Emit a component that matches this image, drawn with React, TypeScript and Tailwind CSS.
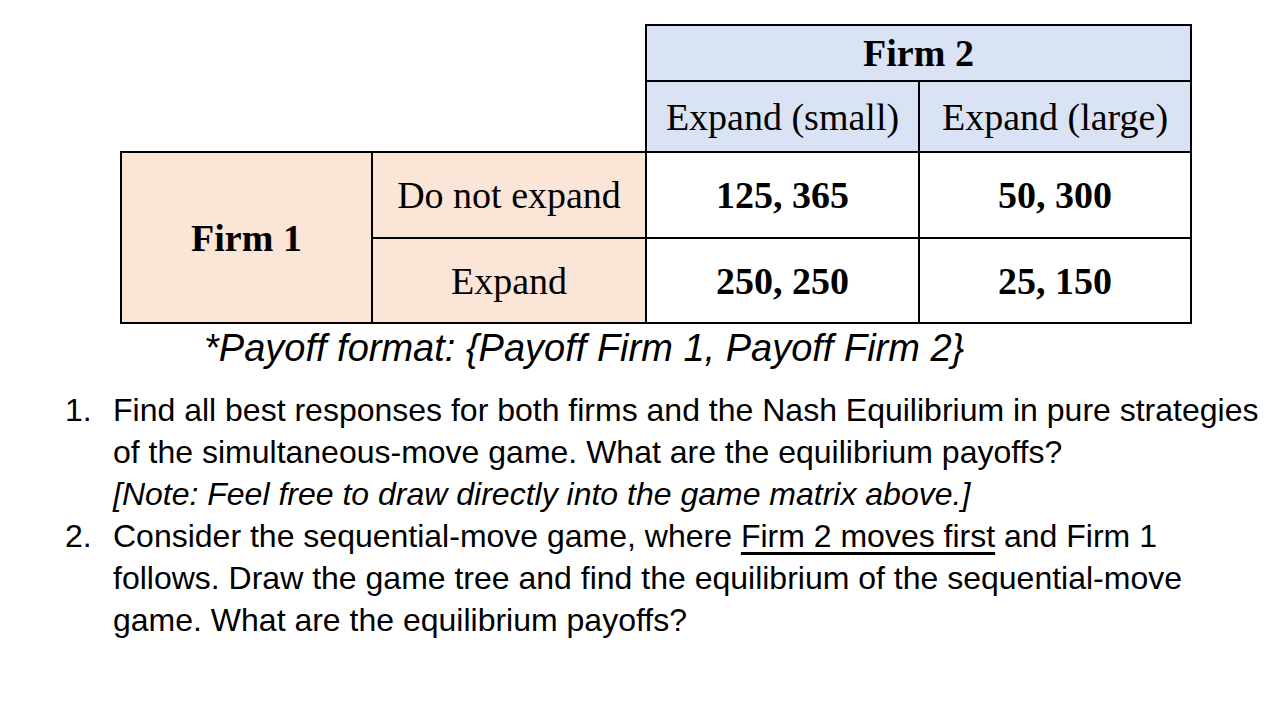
export default function App() {
  const serif = { fontFamily: '"Liberation Serif", "Times New Roman", serif' };
  return (
    <div className="min-h-[724px] w-[1272px] bg-white text-black" style={{ fontFamily: '"Liberation Sans", Arial, sans-serif' }}>
      <div className="pl-[120px] pt-[24px]">
        <table className="table-fixed border-collapse text-[38px] leading-none" style={serif}>
          <colgroup>
            <col className="w-[251px]" />
            <col className="w-[274px]" />
            <col className="w-[273px]" />
            <col className="w-[272px]" />
          </colgroup>
          <tbody>
            <tr className="h-[56px]">
              <td colSpan={2} />
              <td colSpan={2} className="border-2 border-black bg-[#dae3f3] text-center font-bold">
                Firm 2
              </td>
            </tr>
            <tr className="h-[71px]">
              <td colSpan={2} />
              <td className="border-2 border-black bg-[#dae3f3] text-center">Expand (small)</td>
              <td className="border-2 border-black bg-[#dae3f3] text-center">Expand (large)</td>
            </tr>
            <tr className="h-[86px]">
              <td rowSpan={2} className="border-2 border-black bg-[#fbe5d6] text-center font-bold">
                Firm 1
              </td>
              <td className="border-2 border-black bg-[#fbe5d6] text-center">Do not expand</td>
              <td className="border-2 border-black text-center font-bold">125, 365</td>
              <td className="border-2 border-black text-center font-bold">50, 300</td>
            </tr>
            <tr className="h-[85px]">
              <td className="border-2 border-black bg-[#fbe5d6] text-center">Expand</td>
              <td className="border-2 border-black text-center font-bold">250, 250</td>
              <td className="border-2 border-black text-center font-bold">25, 150</td>
            </tr>
          </tbody>
        </table>
      </div>

      <p className="pl-[204px] pt-[4px] text-[38px] italic leading-[40px]">
        *Payoff format: {'{'}Payoff Firm 1, Payoff Firm 2{'}'}
      </p>

      <ol className="mt-[21px] text-[32px] leading-[42px]">
        <li className="flex">
          <span className="w-[113px] shrink-0 pl-[65px]">1.</span>
          <div>
            <div>Find all best responses for both firms and the Nash Equilibrium in pure strategies</div>
            <div>of the simultaneous-move game. What are the equilibrium payoffs?</div>
            <div className="italic">[Note: Feel free to draw directly into the game matrix above.]</div>
          </div>
        </li>
        <li className="flex">
          <span className="w-[113px] shrink-0 pl-[65px]">2.</span>
          <div>
            <div>
              Consider the sequential-move game, where <span className="underline underline-offset-[5px]">Firm 2 moves first</span> and Firm 1
            </div>
            <div>follows. Draw the game tree and find the equilibrium of the sequential-move</div>
            <div>game. What are the equilibrium payoffs?</div>
          </div>
        </li>
      </ol>
    </div>
  );
}
